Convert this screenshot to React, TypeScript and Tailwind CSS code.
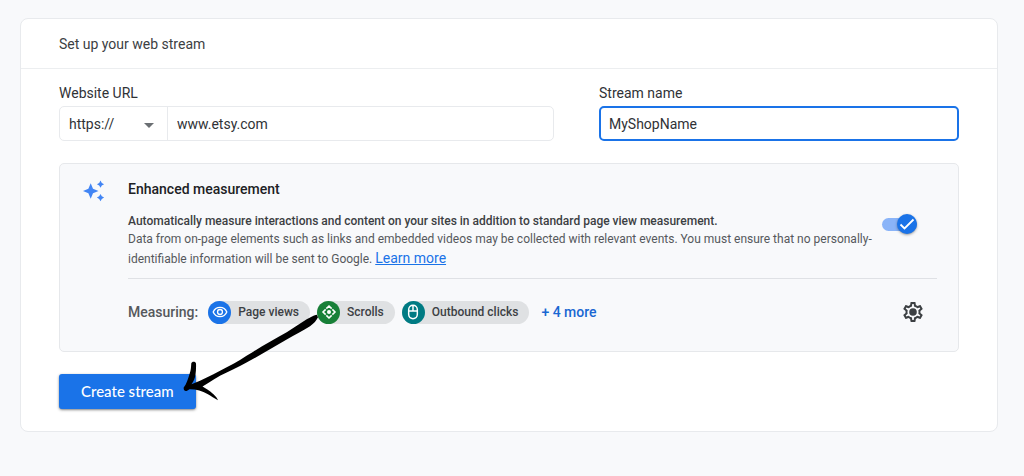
import type { ReactNode } from "react";

function Sparkles() {
  return (
    <svg viewBox="0 0 22 22" className="h-[22px] w-[22px] fill-[#4285f4]" aria-hidden="true">
      <path d="M7.7 3.2 10 8.7l5.5 2.3L10 13.3 7.7 18.8 5.4 13.3 0 11l5.4-2.3Z" />
      <path d="m17.5.6 1.3 2.3 2.3 1.3-2.3 1.3-1.3 2.3-1.3-2.3-2.3-1.3 2.3-1.3Z" />
      <path d="m17.5 14 1.3 2.3 2.3 1.3-2.3 1.3-1.3 2.3-1.3-2.3-2.3-1.3 2.3-1.3Z" />
    </svg>
  );
}

function EyeIcon() {
  return (
    <svg viewBox="0 0 24 24" className="h-4 w-4" fill="none" stroke="white" strokeWidth="2" aria-hidden="true">
      <path d="M1.8 12C3.6 7.600 7.500 5 12 5s8.400 2.600 10.200 7c-1.800 4.400-5.700 7-10.200 7S3.600 16.400 1.800 12Z" />
      <circle cx="12" cy="12" r="3.700" />
    </svg>
  );
}

function ScrollIcon() {
  return (
    <svg viewBox="0 0 24 24" className="h-4 w-4" fill="none" stroke="white" strokeWidth="2.300" aria-hidden="true">
      <path d="m8 7 4-4 4 4M8 17l4 4 4-4M7 8l-4 4 4 4M17 8l4 4-4 4" />
      <circle cx="12" cy="12" r="3" fill="white" stroke="none" />
    </svg>
  );
}

function MouseIcon() {
  return (
    <svg viewBox="0 0 24 24" className="h-4 w-4" fill="none" stroke="white" strokeWidth="2.200" aria-hidden="true">
      <path d="M5.500 8.500a6.500 6.500 0 0 1 13 0v7a6.500 6.500 0 0 1-13 0ZM5.500 10.500h13M12 2v8.500" />
    </svg>
  );
}

function GearIcon() {
  return (
    <svg viewBox="0 0 24 24" className="h-6 w-6 fill-[#3c4043]" aria-hidden="true">
      <path d="M19.430 12.980c.04-.32.07-.64.07-.98 0-.34-.03-.66-.07-.98l2.110-1.650c.19-.15.24-.42.12-.64l-2-3.460c-.09-.16-.26-.25-.44-.25-.06 0-.12.010-.17.030l-2.490 1c-.52-.4-1.080-.73-1.690-.98l-.38-2.650C14.460 2.180 14.250 2 14 2h-4c-.25 0-.46.18-.49.42l-.38 2.650c-.61.25-1.170.59-1.690.98l-2.490-1c-.06-.02-.12-.03-.18-.03-.17 0-.34.09-.43.25l-2 3.460c-.13.22-.07.49.12.64l2.110 1.650c-.04.32-.07.65-.07.98 0 .33.03.66.07.98l-2.110 1.650c-.19.15-.24.42-.12.64l2 3.460c.09.16.26.25.44.25.06 0 .12-.01.17-.03l2.490-1c.52.4 1.080.73 1.690.98l.38 2.650c.03.24.24.42.49.42h4c.25 0 .46-.18.49-.42l.38-2.650c.61-.25 1.170-.59 1.690-.98l2.490 1c.06.02.12.03.18.03.17 0 .34-.09.43-.25l2-3.460c.12-.22.07-.49-.12-.64l-2.110-1.650Zm-1.980-1.710c.04.31.05.52.05.73 0 .21-.02.43-.05.73l-.14 1.130.89.7 1.080.84-.7 1.210-1.270-.51-1.040-.42-.9.68c-.43.32-.84.56-1.250.73l-1.060.43-.16 1.130-.2 1.350h-1.400l-.19-1.350-.16-1.130-1.060-.43c-.43-.18-.83-.41-1.230-.71l-.91-.7-1.060.43-1.270.51-.7-1.210 1.080-.84.89-.7-.14-1.130c-.03-.31-.05-.54-.05-.74s.02-.43.05-.73l.14-1.130-.89-.7-1.080-.84.7-1.210 1.270.51 1.040.42.9-.68c.43-.32.84-.56 1.250-.73l1.060-.43.16-1.130.2-1.350h1.390l.19 1.350.16 1.130 1.060.43c.43.18.83.41 1.230.71l.91.7 1.060-.43 1.270-.51.7 1.210-1.070.85-.89.7.14 1.130Z" />
      <circle cx="12" cy="12" r="3.800" />
    </svg>
  );
}

function Arrow() {
  return (
    <svg
      viewBox="0 0 140 94"
      className="pointer-events-none absolute top-[290px] left-[159px] h-[94px] w-[140px]"
      aria-hidden="true"
    >
      <path d="M136.700 5.700C133 6.500 130 8.500 126.700 10.300L106.700 23.300C96 29.500 84 36 73.300 42.700 64 48 56 54 46.700 58.300 38 63 29 67.500 20 71.700L11.500 75.300C14 71.500 15 69 15.500 65.500 16 62 16.200 58 16 54.500 15.800 52.300 11.800 52 11.300 54.300 11 58 11 61 9.700 64.500 8 70 6.500 75 3.700 78.600 3.300 82.500 6.500 83 9.300 80.200 16 80 22 82 27.500 85 31 87 34.500 89.500 38 91.200 36.500 87.500 32 83.500 27 80.300L22.500 77.600C31 72.500 38 67 46.700 63.500 56 59.500 64 55 73.300 49.800L106.700 30.500C115 25.500 123 21.500 130 17.200 134 14.500 136.500 11.500 138 8.300Z" />
    </svg>
  );
}

function Chip({ color, icon, children }: { color: string; icon: ReactNode; children: ReactNode }) {
  return (
    <li className="flex h-[23px] items-center gap-[7px] rounded-full bg-[#dfe1e3] pr-[11px] text-xs font-medium text-[#3c4043]">
      <span className={`grid h-[23px] w-[23px] place-items-center rounded-full ${color}`}>{icon}</span>
      {children}
    </li>
  );
}

export default function App() {
  return (
    <div className="min-h-screen bg-[#f8f9fb] px-5 pt-[18px] pb-11 font-[Roboto,'Liberation_Sans',sans-serif] text-[#3c4043]">
      <main className="relative mr-[6px] rounded-lg border border-[#e8eaed] bg-white">
        <header className="border-b border-[#eceef0] px-[38px] pt-4 pb-[14px]">
          <h1 className="text-sm leading-[19px]">Set up your web stream</h1>
        </header>

        <form className="px-[38px] pt-[15px] pb-[22px]" onSubmit={(e) => e.preventDefault()}>
          <div className="grid grid-cols-[11fr_8fr] gap-[45px] text-sm text-[#303236]">
            <div>
              <label htmlFor="url" className="block leading-[18px]">Website URL</label>
              <div className="mt-1 flex h-[35px] rounded-[5px] border border-[#e8eaed]">
                <div className="relative w-[108px] shrink-0 border-r border-[#e8eaed]">
                  <select aria-label="Protocol" className="h-full w-full appearance-none bg-transparent pl-[9px] outline-none">
                    <option>https://</option>
                    <option>http://</option>
                  </select>
                  <svg viewBox="0 0 10 5" className="pointer-events-none absolute top-4 right-[13px] h-[5px] w-[10px] fill-[#6b6f73]" aria-hidden="true">
                    <path d="M0 0h10L5 5Z" />
                  </svg>
                </div>
                <input id="url" defaultValue="www.etsy.com" className="min-w-0 flex-1 bg-transparent px-[9px] outline-none" />
              </div>
            </div>
            <div>
              <label htmlFor="name" className="block leading-[18px]">Stream name</label>
              <input
                id="name"
                defaultValue="MyShopName"
                className="mt-1 block h-[35px] w-full rounded-[5px] border-2 border-[#1a73e8] px-2 outline-none"
              />
            </div>
          </div>

          <section className="mt-[22px] flex gap-[23px] rounded-[5px] border border-[#e6e8eb] bg-[#f8f9fb] pr-[21px] pl-[23px]">
            <div className="pt-4">
              <Sparkles />
            </div>
            <div className="min-w-0 flex-1">
              <div className="flex items-center justify-between border-b border-[#dfe1e5] pt-4 pb-[10px]">
                <div>
                  <h2 className="text-sm leading-[18px] font-medium text-[#202124]">Enhanced measurement</h2>
                  <p className="mt-[14px] text-xs leading-[18px] font-medium">
                    Automatically measure interactions and content on your sites in addition to standard page view measurement.
                  </p>
                  <p className="text-xs leading-[18px] text-[#55585c]">
                    Data from on-page elements such as links and embedded videos may be collected with relevant events. You must ensure that no personally-identifiable information will be sent to Google.{" "}
                    <a href="#learn" className="text-sm leading-[20px] text-[#1a73e8] underline">Learn more</a>
                  </p>
                </div>
                <label className="relative mr-5 flex h-5 w-[35px] shrink-0 items-center">
                  <input type="checkbox" role="switch" defaultChecked aria-label="Enhanced measurement" className="peer sr-only" />
                  <span className="h-[13px] w-full rounded-full bg-[#8ab4f8]" />
                  <span className="absolute right-0 grid h-5 w-5 place-items-center rounded-full bg-[#1a73e8] shadow-sm shadow-black/30">
                    <svg viewBox="0 0 20 20" className="h-5 w-5" fill="none" stroke="white" strokeWidth="1.800" aria-hidden="true">
                      <path d="m3.500 10.500 4 4L16.500 5.500" />
                    </svg>
                  </span>
                </label>
              </div>

              <div className="flex h-[72px] items-center pb-[6px]">
                <span className="text-sm font-medium text-[#55585c]">Measuring:</span>
                <ul className="ml-[10px] flex gap-[7px]">
                  <Chip color="bg-[#1a73e8]" icon={<EyeIcon />}>Page views</Chip>
                  <Chip color="bg-[#188038]" icon={<ScrollIcon />}>Scrolls</Chip>
                  <Chip color="bg-[#007b83]" icon={<MouseIcon />}>Outbound clicks</Chip>
                </ul>
                <button type="button" className="ml-3 text-sm font-medium text-[#1967d2]">+ 4 more</button>
                <button type="button" aria-label="Settings" className="mr-3 ml-auto">
                  <GearIcon />
                </button>
              </div>
            </div>
          </section>

          <button
            type="submit"
            className="mt-[22px] h-[35px] rounded-[3px] bg-[#1a73e8] px-[22px] pb-px font-[Lato,Roboto,sans-serif] text-[15px] font-medium text-white shadow-sm shadow-black/40"
          >
            Create stream
          </button>
        </form>
        <Arrow />
      </main>
    </div>
  );
}
